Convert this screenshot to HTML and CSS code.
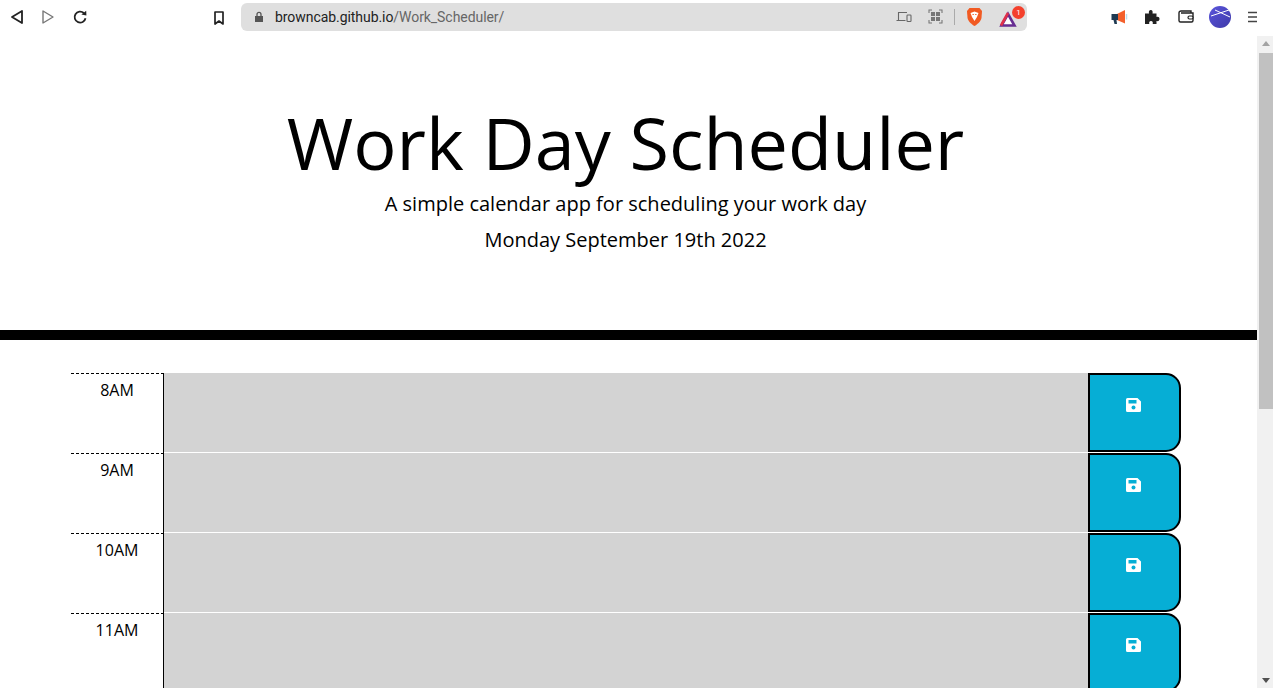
FILE: index.html
```html
<!DOCTYPE html>
<html lang="en">
<head>
<meta charset="utf-8">
<title>Work Day Scheduler</title>
<link rel="stylesheet" href="styles.css">
</head>
<body>
<div class="toolbar">
  <div class="nav">
    <svg class="ic" width="16" height="16" viewBox="0 0 16 16"><path d="M14 2 L4 8 L14 14 Z" fill="none" stroke="#222" stroke-width="1.8" stroke-linejoin="round"/></svg>
    <svg class="ic" width="16" height="16" viewBox="0 0 16 16"><path d="M3 2 L13 8 L3 14 Z" fill="none" stroke="#777" stroke-width="1.4" stroke-linejoin="round"/></svg>
    <svg class="ic" width="16" height="16" viewBox="0 0 16 16"><path d="M13.500 9.200 A5.500 5.500 0 1 1 11.800 4" fill="none" stroke="#222" stroke-width="1.800"/><path d="M9.400 5.600 L14.400 6.400 L14.200 1.800 Z" fill="#222"/></svg>
  </div>
  <svg class="bookmark" width="12" height="14" viewBox="0 0 12 14"><path d="M2 1 H10 V13 L6 10 L2 13 Z" fill="none" stroke="#222" stroke-width="1.700" stroke-linejoin="round"/></svg>
  <div class="urlbar">
    <svg class="lock" width="10" height="12" viewBox="0 0 10 12"><path d="M1 5 H9 V11 H1 Z" fill="#555"/><path d="M3 5 V3.400 A2 2 0 0 1 7 3.400 V5" fill="none" stroke="#555" stroke-width="1.300"/></svg>
    <span class="url">browncab.github.io<span class="url-path">/Work_Scheduler/</span></span>
    <div class="url-icons">
      <svg width="16" height="12" viewBox="0 0 16 12"><path d="M2.500 9 V1.500 H11 M0.500 9.500 H9.500" fill="none" stroke="#666" stroke-width="1.100"/><rect x="11" y="4" width="4" height="6.500" rx="0.700" fill="none" stroke="#666" stroke-width="1.100"/></svg>
      <svg width="15" height="15" viewBox="0 0 15 15"><path d="M1 4 V1 H4 M11 1 H14 V4 M14 11 V14 H11 M4 14 H1 V11" fill="none" stroke="#777" stroke-width="1.100"/><rect x="3" y="3" width="4" height="4" fill="#777"/><rect x="8" y="3" width="4" height="4" fill="#777"/><rect x="3" y="8" width="4" height="4" fill="#777"/><rect x="8" y="8" width="4" height="4" fill="#777"/></svg>
      <span class="divider"></span>
      <svg width="17" height="20" viewBox="0 0 17 20"><path d="M3.500 1 H13.500 L16 4 L15.500 11 C14.500 15 11 17.500 8.500 19 C6 17.500 2.500 15 1.500 11 L1 4 Z" fill="#f15a22"/><path d="M4.500 6 L8.500 4.500 L12.500 6 L11 10 L8.500 14 L6 10 Z" fill="#fff"/><path d="M6.500 7.500 H7.800 M9.200 7.500 H10.500" stroke="#f15a22" stroke-width="1"/></svg>
      <span class="bat">
        <svg width="18" height="16" viewBox="0 0 18 16"><path d="M9 1 L17 15 H1 Z" fill="#fff"/><path d="M9 3 L15.500 14.500 H2.500 Z" fill="none" stroke="#662d91" stroke-width="2.600"/><path d="M9 2 L2 14.500" stroke="#e0304a" stroke-width="2.600"/></svg>
        <span class="badge">1</span>
      </span>
    </div>
  </div>
  <div class="ext">
    <svg width="17" height="16" viewBox="0 0 17 16"><path d="M6 5 L14 1 V14.500 L6 11 Z" fill="#f4602c"/><path d="M0.500 5 H7 V11 H0.500 Z" fill="#1f3a52"/><path d="M2.500 11 H5.500 L6 15 H3.500 Z" fill="#1f3a52"/><path d="M15.500 5 V10.500" stroke="#bfdcec" stroke-width="1.500"/></svg>
    <svg width="16" height="16" viewBox="0 0 16 16"><path d="M1 4.500 H5 C4.500 2.500 5.200 1 6.800 1 C8.400 1 9 2.500 8.500 4.500 H12.500 V8 C14.500 7.500 15.500 8.500 15.500 10 C15.500 11.500 14.500 12.500 12.500 12 V15 H8.700 C9.200 13 8.400 12 7 12 C5.600 12 4.800 13 5.300 15 H1 Z" fill="#222"/></svg>
    <svg class="wallet" width="16" height="13" viewBox="0 0 16 13"><path d="M13 3 V1 H3 A2 2 0 0 0 1 3 V10.500 A1.500 1.500 0 0 0 2.500 12 H13.500 A1.500 1.500 0 0 0 15 10.500 V3 H3" fill="none" stroke="#222" stroke-width="1.400"/><rect x="10" y="6" width="5" height="3" rx="1.500" fill="#fff" stroke="#222" stroke-width="1.200"/></svg>
    <svg class="avatar" width="22" height="22" viewBox="0 0 22 22"><defs><linearGradient id="globe" x1="0" y1="0" x2="1" y2="1"><stop offset="0" stop-color="#5a55dc"/><stop offset="1" stop-color="#3f3aa8"/></linearGradient></defs><circle cx="11" cy="11" r="11" fill="url(#globe)"/><path d="M2 10 L20 4 M6 4 L21 11" stroke="#fff" stroke-width="1"/></svg>
    <svg width="11" height="12" viewBox="0 0 11 12"><path d="M1 1.500 H10 M1 6 H10 M1 10.500 H10" stroke="#444" stroke-width="1.500"/></svg>
  </div>
</div>
<div class="viewport">
  <main class="page">
    <header class="jumbotron">
      <h1 class="title">Work Day Scheduler</h1>
      <p class="lead">A simple calendar app for scheduling your work day</p>
      <p class="lead date">Monday September 19th 2022</p>
    </header>
    <section class="schedule">
      <div class="row"><div class="hour">8AM</div><div class="desc"></div><button class="save"><svg class="disk" width="15" height="14" viewBox="0 0 15 14"><path d="M0 1.500 A1.500 1.500 0 0 1 1.500 0 H11.500 L15 3.500 V12.500 A1.500 1.500 0 0 1 13.500 14 H1.500 A1.500 1.500 0 0 1 0 12.500 Z M2.500 2 V5.500 H10.500 V2 Z" fill="#fff" fill-rule="evenodd"/><circle cx="7.500" cy="9.500" r="2" fill="#06aed5"/></svg></button></div>
      <div class="row"><div class="hour">9AM</div><div class="desc"></div><button class="save"><svg class="disk" width="15" height="14" viewBox="0 0 15 14"><path d="M0 1.500 A1.500 1.500 0 0 1 1.500 0 H11.500 L15 3.500 V12.500 A1.500 1.500 0 0 1 13.500 14 H1.500 A1.500 1.500 0 0 1 0 12.500 Z M2.500 2 V5.500 H10.500 V2 Z" fill="#fff" fill-rule="evenodd"/><circle cx="7.500" cy="9.500" r="2" fill="#06aed5"/></svg></button></div>
      <div class="row"><div class="hour">10AM</div><div class="desc"></div><button class="save"><svg class="disk" width="15" height="14" viewBox="0 0 15 14"><path d="M0 1.500 A1.500 1.500 0 0 1 1.500 0 H11.500 L15 3.500 V12.500 A1.500 1.500 0 0 1 13.500 14 H1.500 A1.500 1.500 0 0 1 0 12.500 Z M2.500 2 V5.500 H10.500 V2 Z" fill="#fff" fill-rule="evenodd"/><circle cx="7.500" cy="9.500" r="2" fill="#06aed5"/></svg></button></div>
      <div class="row"><div class="hour">11AM</div><div class="desc"></div><button class="save"><svg class="disk" width="15" height="14" viewBox="0 0 15 14"><path d="M0 1.500 A1.500 1.500 0 0 1 1.500 0 H11.500 L15 3.500 V12.500 A1.500 1.500 0 0 1 13.500 14 H1.500 A1.500 1.500 0 0 1 0 12.500 Z M2.500 2 V5.500 H10.500 V2 Z" fill="#fff" fill-rule="evenodd"/><circle cx="7.500" cy="9.500" r="2" fill="#06aed5"/></svg></button></div>
    </section>
  </main>
  <div class="scrollbar">
    <span class="arrow-up"></span>
    <span class="thumb"></span>
    <span class="arrow-down"></span>
  </div>
</div>
</body>
</html>
```
FILE: styles.css
```css
* { box-sizing: border-box; }
html, body { margin: 0; height: 100%; overflow: hidden; background: #fff; }
body { font-family: "Open Sans", sans-serif; color: #000; }

.toolbar { height: 36px; display: flex; align-items: center; background: #fff; }
.nav { display: flex; align-items: center; gap: 16px; margin-left: 8px; margin-top: -2px; }
.ic { display: block; }
.bookmark { margin-left: 125px; margin-top: -1px; }
.urlbar { margin-left: 16px; width: 786px; height: 28px; margin-top: -3px; background: #dfdfdf; border-radius: 6px; display: flex; align-items: center; padding: 0 2px 0 13px; }
.lock { flex: none; }
.url { margin-left: 11px; font-family: "Roboto", sans-serif; font-size: 14px; letter-spacing: -0.06px; color: #222; }
.url-path { color: #666; }
.url-icons { margin-left: auto; display: flex; align-items: center; gap: 16px; }
.divider { width: 1px; height: 16px; background: #aaa; margin: 0 -5px; }
.bat { position: relative; width: 26px; height: 20px; display: flex; align-items: flex-end; }
.badge { position: absolute; top: -1px; right: 0; width: 13px; height: 13px; border-radius: 50%; background: #f4402c; color: #fff; font: 8px/13px "Roboto", sans-serif; text-align: center; }
.ext { margin-left: 84px; display: flex; align-items: center; gap: 16px; margin-top: -3px; }
.wallet { margin-left: 2px; }
.avatar { margin-left: -1px; }

.viewport { height: 652px; display: flex; overflow: hidden; }
.page { width: 1257px; flex: none; overflow: hidden; }
.jumbotron { height: 304px; padding: 60px 6px 0 0; border-bottom: 10px solid #000; text-align: center; }
.title { margin: 0 0 1px; font-size: 72px; font-weight: 400; line-height: 92px; }
.lead { margin: 0; font-size: 20px; line-height: 30px; }
.date { margin-top: 6px; }

.schedule { margin: 33px 0 0 71px; width: 1110px; }
.row { display: flex; height: 80px; }
.hour { width: 93px; border-top: 1px dashed #000; border-right: 1px solid #000; padding-top: 4px; font-size: 16px; line-height: 24px; text-align: center; }
.desc { width: 924px; background: #d3d3d3; border-bottom: 1px solid #fff; }
.save { width: 93px; height: 79px; padding: 23px 2px 0 0; display: flex; justify-content: center; align-items: flex-start; background: #06aed5; border: 2px solid #000; border-radius: 0 15px 15px 0; }
.disk { display: block; }

.scrollbar { width: 16px; flex: none; background: #f1f1f1; display: flex; flex-direction: column; align-items: flex-end; position: relative; }
.arrow-up { margin: 5px 3px 0 0; width: 0; height: 0; border: 4px solid transparent; border-top: 0; border-bottom: 5px solid #a3a3a3; }
.thumb { margin-top: 7px; width: 14px; height: 356px; background: #c1c1c1; }
.arrow-down { position: absolute; bottom: 5px; right: 3px; width: 0; height: 0; border: 4px solid transparent; border-bottom: 0; border-top: 5px solid #505050; }
```
